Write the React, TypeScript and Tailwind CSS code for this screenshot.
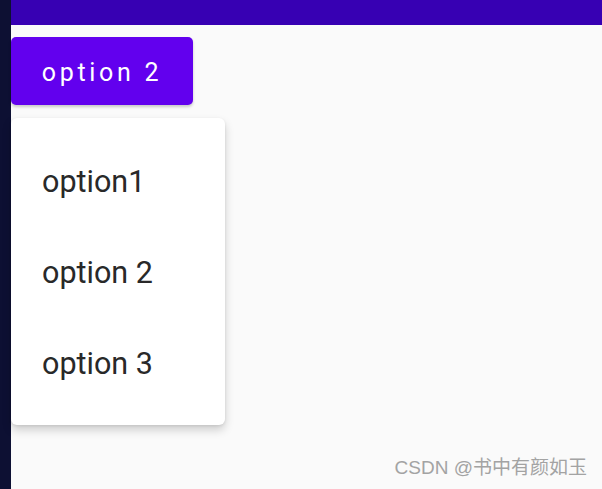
export default function App() {
  const options = ['option1', 'option 2', 'option 3'];

  return (
    <div className="flex h-[489px] w-[602px] overflow-hidden bg-[#fafafa] font-['Roboto',sans-serif]">
      <div className="w-[11px] shrink-0 bg-[#0d1033]" />

      <div className="flex flex-1 flex-col">
        <div className="h-[25px] shrink-0 bg-[#3700b3]" />

        <div className="flex flex-1 flex-col items-start pt-3">
          <button className="flex h-[68px] w-[182px] items-center justify-center rounded-[5px] bg-[#6200ee] pt-[3px] text-[25px] tracking-[3.7px] text-white shadow-[0_2px_3px_rgba(0,0,0,0.2)]">
            option 2
          </button>

          <div className="mt-[13px] flex w-[214px] flex-col rounded-[6px] bg-white py-[17px] shadow-[0_5px_10px_rgba(0,0,0,0.18),0_1px_3px_rgba(0,0,0,0.08)]">
            {options.map((o) => (
              <div key={o} className="flex h-[91px] items-center pl-[31px] pt-[2px] text-[30.5px] text-[#292929]">
                {o}
              </div>
            ))}
          </div>

          <div className="mt-auto mb-[7px] self-end pr-[15px] font-['Liberation_Sans','Noto_Sans_CJK_SC',sans-serif] text-[19px] text-[#a3a3a3]">
            CSDN @书中有颜如玉
          </div>
        </div>
      </div>
    </div>
  );
}
